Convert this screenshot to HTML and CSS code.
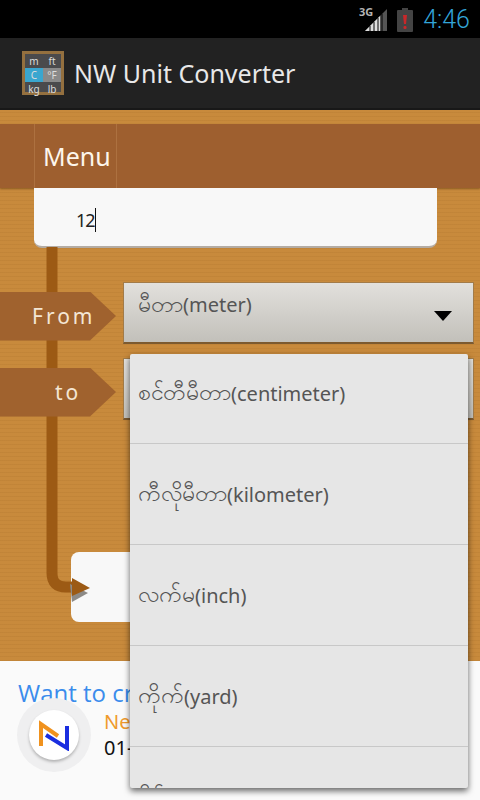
FILE: index.html
```html
<!DOCTYPE html>
<html lang="en">
<head>
  <meta charset="UTF-8">
  <meta name="viewport" content="width=device-width, initial-scale=1.0">
  <title>NW Unit Converter</title>
  <link rel="stylesheet" href="styles.css">
</head>
<body>

  <div class="phone">

    <!-- Status bar -->
    <div class="status-bar">
      <span class="net-label">3G</span>
      <svg class="signal" width="22" height="24" viewBox="0 0 22 24">
        <polygon points="0,23 22,1 22,23" fill="#555"/>
        <polygon points="0,23 15,8 15,23" fill="#ddd"/>
        <path d="M5 23V18M9 23V14M13 23V10M17 23V6" stroke="#000" stroke-width="1"/>
      </svg>
      <svg class="battery" width="16" height="24" viewBox="0 0 16 24">
        <rect x="5" y="0" width="6" height="3" fill="#444"/>
        <rect x="0" y="2" width="16" height="22" rx="1" fill="#444"/>
        <path d="M6 7H10L9 16H7Z" fill="#c8282a"/>
        <rect x="6.5" y="18" width="3" height="3" rx="1" fill="#c8282a"/>
      </svg>
      <span class="clock">4:46</span>
    </div>

    <!-- Action bar -->
    <div class="action-bar">
      <div class="app-icon">
        <span>m</span><span>ft</span>
        <span class="on">C</span><span class="off">°F</span>
        <span>kg</span><span>lb</span>
      </div>
      <div class="app-title">NW Unit Converter</div>
    </div>

    <!-- Wood panel -->
    <div class="wood">
      <div class="menu-bar">
        <div class="menu-item">Menu</div>
      </div>

      <div class="value-field"><span class="value-text">12</span></div>

      <div class="convert-row from-row">
        <div class="tag">From</div>
        <div class="spinner">
          <span class="spinner-text"><span class="mm">မီတာ</span>(meter)</span>
          <span class="spinner-arrow"></span>
        </div>
      </div>

      <div class="convert-row to-row">
        <div class="tag tag-to">to</div>
        <div class="spinner"></div>
      </div>

      <div class="result-box"></div>

      <svg class="rail" width="60" height="360" viewBox="0 0 60 360">
        <path d="M6 0V326Q6 340 20 340H30" fill="none" stroke="#9c5a14" stroke-width="11"/>
        <polygon points="26,332 44,341 28,350" fill="#8d8a86" transform="translate(-2 5)"/>
        <polygon points="26,331 44,341 26,349" fill="#9c5a14"/>
      </svg>
    </div>

    <!-- Ad -->
    <div class="ad">
      <div class="ad-title">Want to create</div>
      <div class="ad-row">
        <div class="ad-logo">
          <svg width="32" height="32" viewBox="0 0 32 32">
            <path d="M3 27V5L20 17" fill="none" stroke="#f0921e" stroke-width="4"/>
            <path d="M29 7V29L8 16" fill="none" stroke="#1a2ee0" stroke-width="4"/>
          </svg>
        </div>
        <div class="ad-info">
          <div class="ad-name">Ne</div>
          <div class="ad-phone">01-</div>
        </div>
      </div>
    </div>

    <!-- Dropdown list -->
    <div class="popup">
      <div class="popup-list">
        <div class="popup-item"><span class="mm">စင်တီမီတာ</span>(centimeter)</div>
        <div class="popup-item"><span class="mm">ကီလိုမီတာ</span>(kilometer)</div>
        <div class="popup-item"><span class="mm">လက်မ</span>(inch)</div>
        <div class="popup-item"><span class="mm">ကိုက်</span>(yard)</div>
        <div class="popup-item"><span class="mm">မိုင်</span>(mile)</div>
      </div>
    </div>

  </div>

</body>
</html>
```

FILE: styles.css
```css
body {
  margin: 0;
  padding: 0;
  font-family: "Noto Sans", "Open Sans", sans-serif;
  background-color: #000;
}

.phone {
  position: relative;
  width: 480px;
  height: 800px;
  overflow: hidden;
}

.mm {
  font-size: 23px;
}

/* Status bar */
.status-bar {
  display: flex;
  align-items: center;
  justify-content: flex-end;
  height: 38px;
  padding-right: 10px;
  box-sizing: border-box;
  background-color: #000;
}

.net-label {
  align-self: flex-start;
  margin: 4px -8px 0 0;
  font-size: 11px;
  font-weight: bold;
  color: #b5b5b5;
}

.signal {
  margin-top: 1px;
}

.battery {
  margin-left: 10px;
  margin-top: 1px;
}

.clock {
  margin-left: 10px;
  font-family: Roboto, sans-serif;
  font-weight: 300;
  font-size: 25px;
  color: #33a5d8;
}

/* Action bar */
.action-bar {
  display: flex;
  align-items: center;
  height: 72px;
  padding-left: 22px;
  box-sizing: border-box;
  background-color: #222;
  border-bottom: 2px solid #181818;
}

.app-icon {
  display: grid;
  grid-template-columns: 1fr 1fr;
  grid-template-rows: repeat(3, 1fr);
  width: 42px;
  height: 44px;
  box-sizing: border-box;
  border: 3px solid #94703f;
  background-color: #4a4a4c;
}

.app-icon span {
  display: flex;
  align-items: center;
  justify-content: center;
  font-size: 10px;
  color: #ddd;
}

.app-icon .on {
  background-color: #3aa6cf;
}

.app-icon .off {
  background-color: #8a8a8a;
}

.app-title {
  margin-left: 10px;
  font-size: 25px;
  color: #e8e8e8;
}

/* Wood panel */
.wood {
  position: relative;
  height: 551px;
  padding-top: 14px;
  box-sizing: border-box;
  background-color: #c88a3c;
  background-image: repeating-linear-gradient(0deg, rgba(120, 70, 10, 0.08) 0, rgba(120, 70, 10, 0.08) 1px, transparent 1px, transparent 4px);
}

.menu-bar {
  display: flex;
  height: 64px;
  padding-left: 34px;
  background-color: #9e5f2f;
  box-shadow: 0 1px 2px rgba(60, 30, 0, 0.4);
}

.menu-item {
  display: flex;
  align-items: center;
  width: 83px;
  padding-left: 8px;
  box-sizing: border-box;
  font-size: 25px;
  color: #fdf6ec;
  border-left: 1px solid #ad7140;
  border-right: 1px solid #ad7140;
}

.value-field {
  display: flex;
  align-items: center;
  width: 403px;
  height: 60px;
  margin-left: 34px;
  padding: 6px 0 0 42px;
  box-sizing: border-box;
  background-color: #f8f8f8;
  border-bottom: 2px solid #b4aca4;
  border-radius: 0 0 8px 8px;
}

.value-text {
  font-size: 18px;
  line-height: 24px;
  letter-spacing: -1px;
  color: #222;
  border-right: 1px solid #111;
}

.convert-row {
  position: relative;
  z-index: 1;
  display: flex;
  align-items: center;
}

.from-row {
  margin-top: 34px;
}

.to-row {
  margin-top: 14px;
}

.tag {
  display: flex;
  align-items: center;
  width: 116px;
  height: 49px;
  margin: 6px 7px 0 0;
  padding-left: 32px;
  box-sizing: border-box;
  font-size: 21px;
  letter-spacing: 3px;
  color: #f4e6d4;
  background-color: #a0622e;
  clip-path: polygon(0 0, 90px 0, 116px 50%, 90px 100%, 0 100%);
}

.tag-to {
  padding-left: 55px;
}

.spinner {
  position: relative;
  width: 351px;
  height: 62px;
  padding: 4px 14px;
  box-sizing: border-box;
  background-image: linear-gradient(#e2e0dc, #c2c0ba);
  border: 1px solid #a27b48;
  border-bottom: 2px solid #7c5a30;
}

.spinner-text {
  font-size: 20px;
  color: #555;
}

.spinner-arrow {
  position: absolute;
  right: 21px;
  top: 28px;
  border-left: 9px solid transparent;
  border-right: 9px solid transparent;
  border-top: 10px solid #000;
}

.result-box {
  width: 366px;
  height: 70px;
  margin: 132px 0 0 71px;
  background-color: #f8f8f8;
  border-radius: 8px;
}

.rail {
  position: absolute;
  left: 46px;
  top: 137px;
}

/* Ad */
.ad {
  height: 139px;
  padding: 16px 0 0 18px;
  box-sizing: border-box;
  background-color: #fafafa;
}

.ad-title {
  font-family: "Open Sans", sans-serif;
  font-size: 24px;
  line-height: 32px;
  color: #3a8cec;
}

.ad-row {
  display: flex;
  align-items: center;
}

.ad-logo {
  display: flex;
  align-items: center;
  justify-content: center;
  width: 50px;
  height: 50px;
  margin-left: 11px;
  background-color: #fff;
  border-radius: 50%;
  box-shadow: 0 2px 3px rgba(0, 0, 0, 0.25), 0 0 0 12px #efeff0;
}

.ad-info {
  margin-left: 25px;
}

.ad-name {
  font-size: 20px;
  line-height: 26px;
  color: #ef9a2d;
}

.ad-phone {
  font-size: 20px;
  line-height: 26px;
  color: #111;
}

/* Dropdown list */
.popup {
  position: absolute;
  z-index: 2;
  left: 130px;
  top: 354px;
  width: 338px;
  height: 434px;
  overflow: hidden;
  background-color: #e6e6e6;
  border-radius: 2px;
  box-shadow: 0 3px 6px rgba(0, 0, 0, 0.6);
}

.popup-list {
  margin-top: -11px;
}

.popup-item {
  display: flex;
  align-items: center;
  height: 101px;
  padding-left: 8px;
  box-sizing: content-box;
  height: 100px;
  font-size: 20px;
  color: #555;
  border-bottom: 1px solid #c8c8c8;
}

.popup-item:last-child {
  border-bottom: none;
}
```
